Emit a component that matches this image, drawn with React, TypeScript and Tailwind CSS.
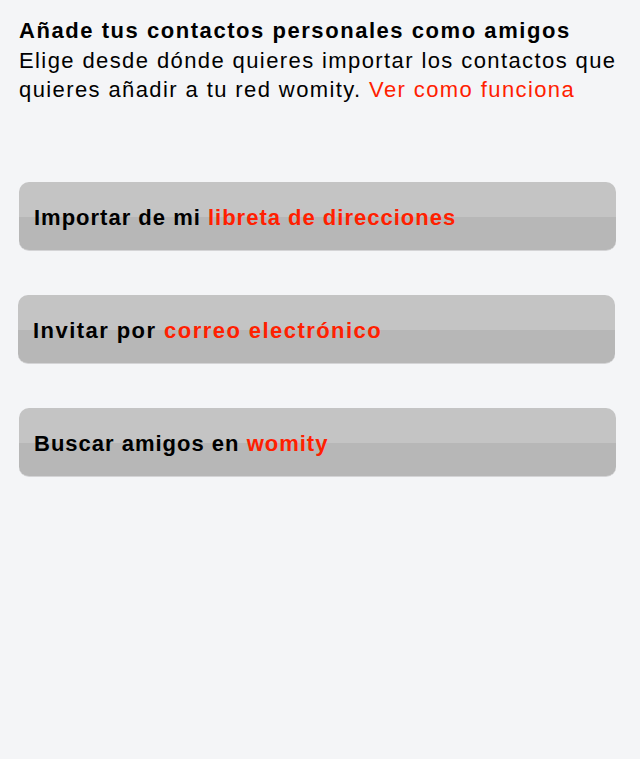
export default function App() {
  const options = [
    { label: "Importar de mi ", accent: "libreta de direcciones", cls: "ml-[19px] mr-[24px] tracking-[1px]" },
    { label: "Invitar por ", accent: "correo electrónico", cls: "ml-[18px] mr-[25px] tracking-[1.45px]" },
    { label: "Buscar amigos en ", accent: "womity", cls: "ml-[19px] mr-[24px] tracking-[1px]" },
  ];

  return (
    <main
      className="min-h-[759px] w-[640px] bg-[#f4f5f7] text-black"
      style={{ fontFamily: '"Liberation Sans", Arial, sans-serif' }}
    >
      {/* Intro */}
      <div className="px-[19px] pt-[16px]">
        <h2 className="whitespace-nowrap text-[22px] font-bold leading-[29px] tracking-[1.55px]">
          Añade tus contactos personales como amigos
        </h2>
        <p className="whitespace-nowrap pt-[1px] text-[22px] leading-[29px] tracking-[1.4px]">
          Elige desde dónde quieres importar los contactos que
          <br />
          quieres añadir a tu red womity. <span className="text-[#ff2000]">Ver como funciona</span>
        </p>
      </div>

      {/* Options */}
      <div className="mt-[78px] flex flex-col gap-[44px]">
        {options.map((o, i) => (
          <button
            key={i}
            className={`${o.cls} flex h-[69px] items-center rounded-[10px] border-b border-[#d4d4d6] bg-[linear-gradient(to_bottom,#c4c4c4_0%,#c4c4c4_52%,#b7b7b7_52%,#b7b7b7_100%)] px-[15px] pt-[2px] text-left text-[22px] font-bold`}
          >
            <span className="whitespace-nowrap">
              {o.label}
              <span className="text-[#ff2000]">{o.accent}</span>
            </span>
          </button>
        ))}
      </div>
    </main>
  );
}
